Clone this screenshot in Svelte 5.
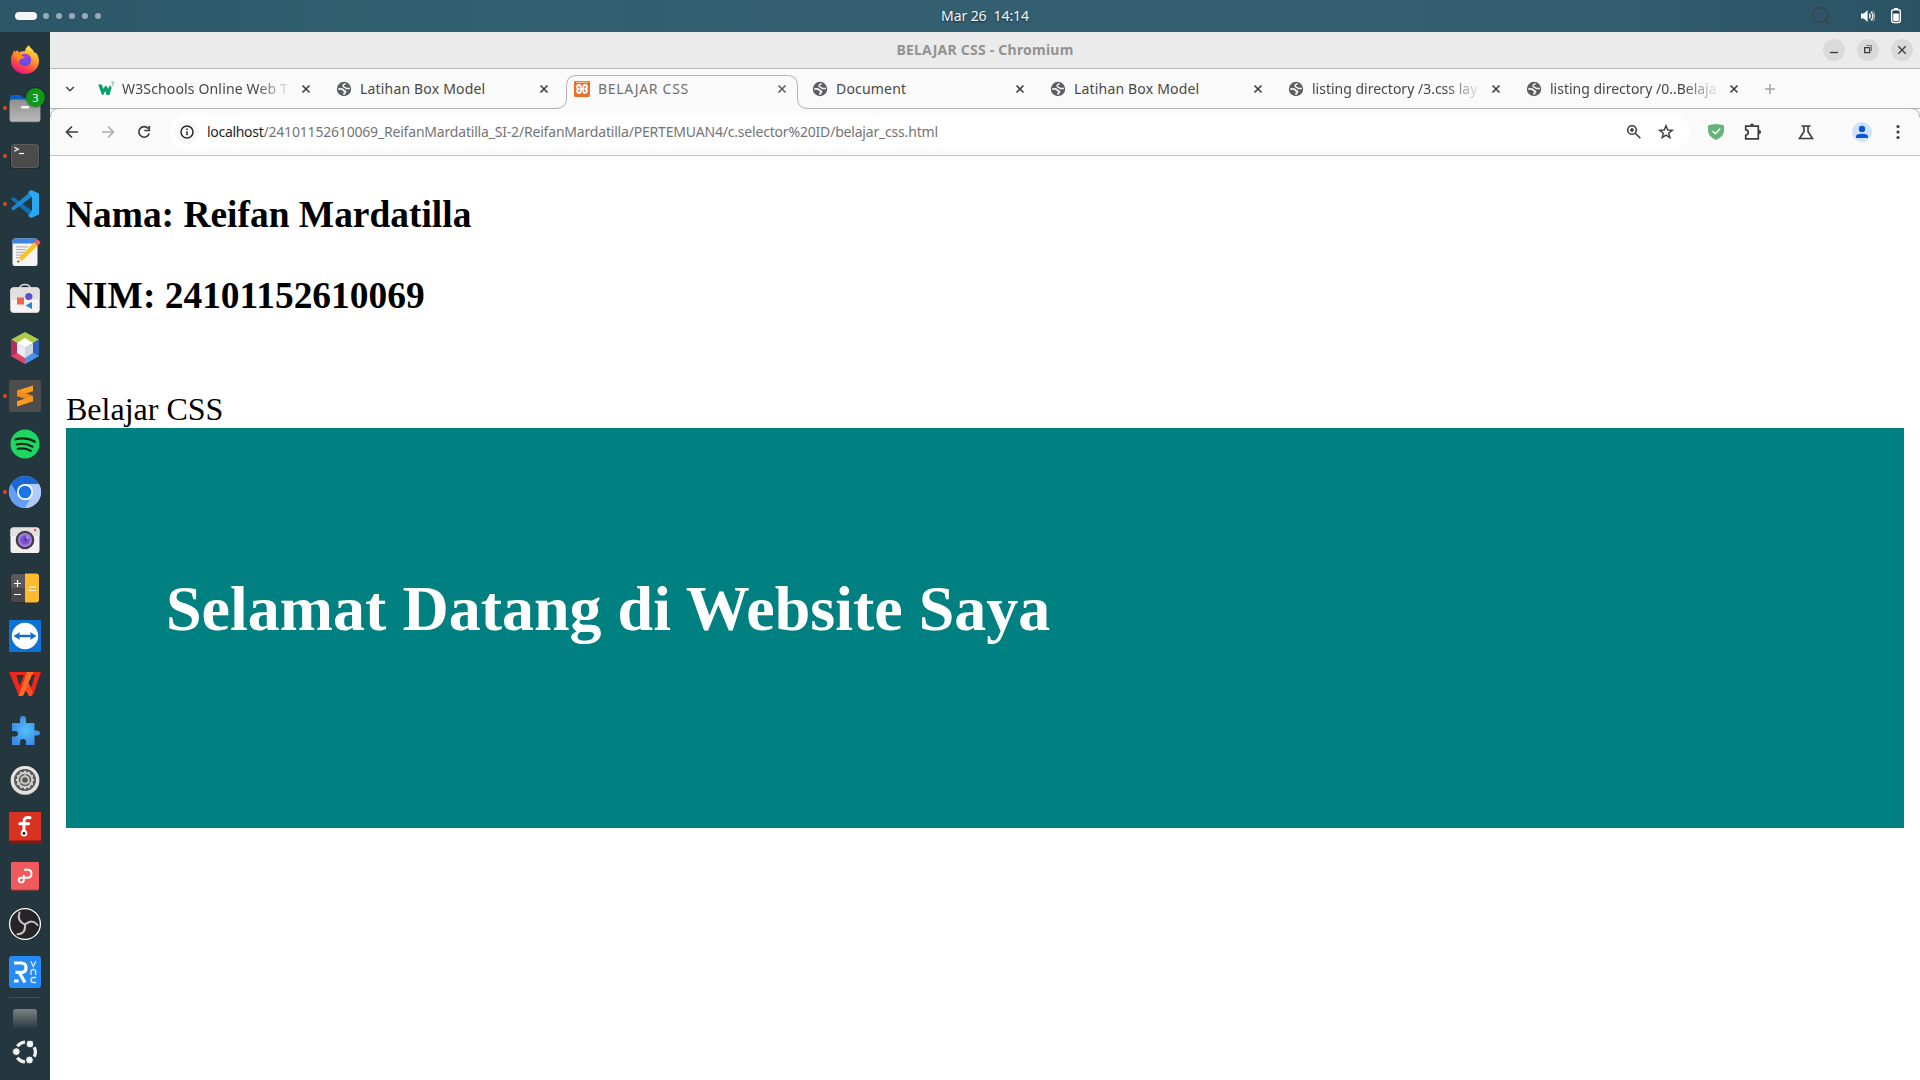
<script>
  const tabs = [
    { title: 'W3Schools Online Web T', icon: 'w3', fade: true, cls: 'w3' },
    { title: 'Latihan Box Model', icon: 'globe', cls: 'box' },
    { title: 'BELAJAR CSS', icon: 'xampp', active: true, cls: 'css' },
    { title: 'Document', icon: 'globe', cls: 'doc' },
    { title: 'Latihan Box Model', icon: 'globe', cls: 'box' },
    { title: 'listing directory /3.css lay', icon: 'globe', fade: true, cls: 'list' },
    { title: 'listing directory /0..Belaja', icon: 'globe', fade: true, cls: 'list' }
  ];

  const dock = [
    { id: 'firefox' },
    { id: 'files', running: true, badge: '3' },
    { id: 'terminal', running: true },
    { id: 'vscode', running: true },
    { id: 'editor' },
    { id: 'software' },
    { id: 'netbeans' },
    { id: 'sublime', running: true },
    { id: 'spotify' },
    { id: 'chromium', running: true },
    { id: 'camera' },
    { id: 'calculator' },
    { id: 'teamviewer' },
    { id: 'wps' },
    { id: 'extensions' },
    { id: 'settings' },
    { id: 'fritzing' },
    { id: 'pdf' },
    { id: 'obs' },
    { id: 'vnc' }
  ];

  const teeth = Array.from({ length: 12 }, (_, i) => i * 30);
</script>

<div class="desktop">
  <header class="topbar">
    <div class="workspaces">
      <i class="current"></i><i></i><i></i><i></i><i></i><i></i>
    </div>
    <div class="clock">Mar 26&nbsp; 14:14</div>
    <div class="tray">
      <svg class="search" width="20" height="20" viewBox="0 0 20 20" fill="none" stroke="#3d4448" stroke-width="1.5">
        <circle cx="9.200" cy="9" r="7.500" /><path d="M14.300 14.200l3.400 3.400" stroke-width="2.200" />
      </svg>
      <svg class="volume" width="18" height="18" viewBox="0 0 18 18">
        <path d="M2 6.600h2.800L8.600 3v12L4.800 11.400H2z" fill="#f4f6f7" />
        <path d="M10.300 6.800q1.800 2.200 0 4.400M12 4.600q3.800 4.400 0 8.800" fill="none" stroke="#f4f6f7" stroke-width="1.400" />
        <path d="M14 3.600q3.400 5.400 0 10.800" fill="none" stroke="#a9b8bf" stroke-width="1" />
      </svg>
      <svg class="battery" width="14" height="18" viewBox="0 0 14 18">
        <path d="M5 1h4v2H5z" fill="#fff" />
        <rect x="2.700" y="2.700" width="8.600" height="12.800" rx="2" fill="#24404c" stroke="#fff" stroke-width="1.400" />
        <rect x="4.200" y="6.500" width="5.600" height="7.600" rx=".8" fill="#fff" />
      </svg>
    </div>
  </header>

  <div class="workarea">
    <nav class="dock">
      {#each dock as app (app.id)}
        <div class="app">
          <svg width="50" height="48" viewBox="0 0 50 48">
            {#if app.running}<circle cx="5" cy="24" r="2" fill="#dc4a1b" />{/if}
            {#if app.id === 'firefox'}
              <defs>
                <linearGradient id="ffa" x1=".8" y1="0" x2=".3" y2="1">
                  <stop offset="0" stop-color="#fff44f" /><stop offset=".4" stop-color="#ffa32a" />
                  <stop offset=".7" stop-color="#ff4b3e" /><stop offset="1" stop-color="#e5108a" />
                </linearGradient>
                <radialGradient id="ffb" cx=".6" cy=".2" r=".9">
                  <stop offset="0" stop-color="#a33bf0" /><stop offset="1" stop-color="#4a54dd" />
                </radialGradient>
              </defs>
              <path d="M29 9.200c.5 1.800 2 2.800 3.400 4.200 1.200 1.200 1.700 2.400 2 3.600l1.200-.6c2.200 2.300 3.400 5.300 3.400 8.400 0 7.400-6.200 13.200-14 13.200S11 32.200 11 24.800c0-3.600.8-6 2.200-8 .1-1 .5-2 1.200-2.900l.8 2 2.800-2 .4 2.600c3-1.500 5-1.300 6.500-1.200.3-2.300 1.700-4.700 4.100-6.100z" fill="url(#ffa)" />
              <circle cx="25" cy="24" r="6.200" fill="url(#ffb)" />
              <path d="M14 17.200c3.500-.8 7 .5 8.200 3l2.500.3c-.3 1.600-2.400 2-4.700 3l-1.300 1.600c-1.600-1.100-3.600-4-4.700-7.900z" fill="#ff8a1e" />
            {:else if app.id === 'files'}
              <path d="M10 13q0-2 2-2h8l3 2.500h14q2 0 2 2V22H10z" fill="#0b5fc4" />
              <rect x="9.700" y="16.200" width="30.600" height="22" rx="2.200" fill="#777" />
              <rect x="9.700" y="15.500" width="30.600" height="22" rx="2.200" fill="url(#fol)" />
              <defs><linearGradient id="fol" x1="0" y1="0" x2="0" y2="1"><stop offset="0" stop-color="#8f8f8f" /><stop offset="1" stop-color="#b9b9b9" /></linearGradient></defs>
              <rect x="21" y="22" width="8" height="2.400" rx=".8" fill="#f5f5f5" />
            {:else if app.id === 'terminal'}
              <rect x="10.500" y="12" width="29" height="24.500" rx="2.500" fill="#1d1d1d" />
              <rect x="11.500" y="12.500" width="27" height="23" rx="2" fill="#4b4b4b" stroke="#686868" stroke-width=".8" />
              <path d="M14.300 15.300l4 2-4 2" fill="none" stroke="#fff" stroke-width="1.200" /><path d="M19 21.500h5" stroke="#fff" stroke-width="1.200" />
            {:else if app.id === 'vscode'}
              <path d="M11.300 18.500l2-1.600 18.500 13.700V37L11.500 19.800z" fill="#0f6fb5" />
              <path d="M11.300 29l2 1.600 18.500-13.700V10.500L11.500 27.700z" fill="#168bd2" />
              <path d="M31 10l8 3.500v21L31 38l-3-2 4-5.500V17.300L28 12z" fill="#29a8f2" />
            {:else if app.id === 'editor'}
              <g transform="translate(0 -.6)">
                <rect x="12.500" y="11" width="25" height="27.500" rx="2.500" fill="#f5f5f5" />
                <path d="M12.500 16v-2.500q0-2.500 2.500-2.500h20q2.500 0 2.500 2.500V16z" fill="#3b84e4" />
                <path d="M16 19.500h12M16 22.200h10M16 24.900h9M16 27.600h7M16 30.300h5" stroke="#a5a5a5" stroke-width="1" />
                <path d="M17.500 34.800l1.800-5L34.500 14.500l3.500 3.600L22.500 33z" fill="#f6c32c" />
                <path d="M34 15l3-3q3 .5 3.500 3.500l-2.800 2.800z" fill="#e8636a" />
                <path d="M17.500 34.800l1.800-5 3.200 3.200z" fill="#f5dba8" /><circle cx="18.200" cy="34.200" r=".9" fill="#333" />
              </g>
            {:else if app.id === 'software'}
              <g transform="translate(0 -2.500)">
                <path d="M19.800 15c0-5.500 10.400-5.500 10.400 0" fill="none" stroke="#dcdcdc" stroke-width="1.500" />
                <rect x="10.500" y="14" width="29" height="25.500" rx="3" fill="#c9c7c4" />
                <rect x="10.500" y="14" width="29" height="24.800" rx="3" fill="#f5f4f2" /><path d="M10.500 26V17q0-3 3-3h23q3 0 3 3v9z" fill="#e2e0de" />
                <rect x="17" y="24" width="7" height="7" fill="#f06450" />
                <circle cx="28.800" cy="23" r="3.600" fill="#5a4fd0" /><path d="M25.500 32l6.500-3.500v7z" fill="#2084d8" />
              </g>
            {:else if app.id === 'netbeans'}
              <path d="M25 8l14 7.500L25 24 11 15.500z" fill="#acc94b" />
              <path d="M11 15.500L25 24v16l-14-8z" fill="#b0305a" /><path d="M11 32l6-3 8 4v7z" fill="#dc4568" />
              <path d="M39 15.500L25 24v16l14-8z" fill="#2c62b8" /><path d="M39 32l-6-3-8 4v7z" fill="#4a96e4" />
              <path d="M25 14l8 5-8 5-8-5z" fill="#fff" /><path d="M17 19l8 5v10l-8-5z" fill="#e8eef2" /><path d="M33 19l-8 5v10l8-5z" fill="#cbd6e0" />
            {:else if app.id === 'sublime'}
              <rect x="9" y="8" width="32" height="32" rx="2" fill="#4d4d4d" />
              <path d="M17 18.500l16-5v5.700l-16 5z" fill="#ff9a1f" /><path d="M17 18.500v5.700l16 5v-5.500z" fill="#f28a14" /><path d="M17 29.200l16-5.300v5.400l-16 5.200z" fill="#ff9a1f" />
            {:else if app.id === 'spotify'}
              <circle cx="25" cy="24" r="14.500" fill="#1ed760" />
              <path d="M15.500 19.300q10.500-2.600 19.500 2.400M16.800 24.400q8.500-2 15.700 2.200M17.800 28.800q7-1.600 12.800 2" fill="none" stroke="#14261b" stroke-width="2.200" stroke-linecap="round" />
            {:else if app.id === 'chromium'}
              <circle cx="25" cy="24" r="16" fill="#aecbfa" />
              <path d="M11.100 16A16 16 0 0 1 38.900 16H25L18 28z" fill="#1967d2" />
              <path d="M11.100 16L18.100 28 25 32h7L25 40A16 16 0 0 1 11.100 16z" fill="#669df6" />
              <path d="M38.900 16H25l7 12-7 12A16 16 0 0 0 38.900 16z" fill="#aecbfa" />
              <circle cx="25" cy="24" r="8" fill="#fff" /><circle cx="25" cy="24" r="6.300" fill="#1a73e8" />
            {:else if app.id === 'camera'}
              <rect x="10.500" y="11.500" width="29" height="25.500" rx="2.800" fill="#f2f1ef" /><path d="M10.500 20v-5.500q0-3 3-3h23q3 0 3 3V20z" fill="#e2e1df" />
              <circle cx="25" cy="24" r="9.300" fill="#403f45" /><circle cx="25" cy="24" r="7" fill="#9d80dc" /><circle cx="25" cy="24" r="4.800" fill="#8250cf" />
              <circle cx="25.500" cy="23.500" r="2" fill="#663ab5" /><circle cx="27.500" cy="21.500" r="1.200" fill="#bca4ed" /><rect x="34" y="13.300" width="2" height="1.800" fill="#e33" />
            {:else if app.id === 'calculator'}
              <rect x="10.500" y="9.500" width="29" height="29" rx="3" fill="#5a5a5a" stroke="#292929" />
              <path d="M25 9.500h11q3 0 3 3v23q0 3-3 3H25z" fill="#fbbb2c" /><path d="M11 24h14v14H14q-3 0-3-3z" fill="#484848" />
              <path d="M14 19.500h7M17.500 16v7M14 30.500h7M29 23h7M29 26.500h7" stroke="#fff" stroke-width="1.200" />
            {:else if app.id === 'teamviewer'}
              <rect x="9" y="8" width="32" height="32" rx="1" fill="#0d72d6" /><circle cx="25" cy="24" r="13.200" fill="#fff" />
              <path d="M13.500 24l6.500-4-.8 2.700h11.600L30 20l6.500 4-6.500 4 .8-2.700H19.200L20 28z" fill="#116dcb" />
            {:else if app.id === 'wps'}
              <path d="M9 12h32L33.500 34q-.8 2-2.600 2H29l-3.300-6-1.700 4q-.8 2-2.500 2H19z" fill="#ef261b" />
              <path d="M16.500 15h7.500l-4.500 11z" fill="#24363e" />
              <path d="M27 12h6.500L24 34q-.8 2-2.500 2H18.500z" fill="#ff6a27" />
              <path d="M32 15h3l-4 13-2.500-5z" fill="#24363e" />
              <path d="M28 22l4.500 10-1 4H29l-3.300-6z" fill="#fa521f" />
            {:else if app.id === 'extensions'}
              <defs><radialGradient id="ext"><stop offset="0" stop-color="#4fc2fb" /><stop offset="1" stop-color="#408de8" /></radialGradient></defs>
              <path d="M12 15h8v-4q0-3 3-3t3 3v4h8.500v7.500h2.500q3 0 3 2.500t-3 2.500h-2.500V37H26v-3q0-3-3-3t-3 3v3h-8v-8.500h3q3-.2 3-2.700t-3-2.800h-3z" fill="url(#ext)" />
            {:else if app.id === 'settings'}
              <circle cx="25" cy="24.500" r="14.500" fill="#b9b9b6" /><circle cx="25" cy="24" r="14" fill="#e5e4e1" /><circle cx="25" cy="24" r="11" fill="#575757" />
              <circle cx="25" cy="24" r="7.200" fill="none" stroke="#d2d2cf" stroke-width="2" />
              {#each teeth as angle}
                <path d="M25 14.800v2" transform="rotate({angle} 25 24)" stroke="#d2d2cf" stroke-width="2" />
              {/each}
              <circle cx="25" cy="24" r="3.800" fill="none" stroke="#c9c9c6" stroke-width="2" /><path d="M25 20v-3M21.500 26L19 27.500M28.500 26l2.500 1.500" stroke="#c9c9c6" stroke-width="1.200" />
            {:else if app.id === 'fritzing'}
              <rect x="9" y="8" width="32" height="32" fill="#d93223" /><rect x="9" y="36.500" width="32" height="3.500" fill="#7d1a10" />
              <path d="M30 13.700q-6-1.200-6 4v9M19.800 19.700h8.800" fill="none" stroke="#fff" stroke-width="3" stroke-linecap="round" />
              <circle cx="24" cy="29.300" r="2.400" fill="#3a1512" stroke="#fff" stroke-width="1.800" />
            {:else if app.id === 'pdf'}
              <rect x="11" y="10" width="28" height="28.500" rx="1.500" fill="#b73c40" /><rect x="11" y="10" width="28" height="27.500" rx="1.500" fill="#f05a5d" />
              <path d="M24 17.800h3.500q4 0 4 4t-4 4h-6q-2.700 0-2.700 2.300t2.300 2.300q2.700 0 2.700-2.500v-5" fill="none" stroke="#fff" stroke-width="1.900" />
            {:else if app.id === 'obs'}
              <circle cx="25" cy="24" r="15.400" fill="#272427" stroke="#fff" stroke-width="1.300" />
              <path d="M25 24.500Q16.500 21 19.500 12.500M25 24.500Q32.500 18.500 37.500 25M25 24.500Q26 34 17.500 34.300" fill="none" stroke="#c5c3c6" stroke-width="2" stroke-linecap="round" />
            {:else if app.id === 'vnc'}
              <rect x="9" y="8" width="32" height="32" rx="3" fill="#268bf5" />
              <path d="M14 15h7q5 0 5 4.700t-5 4.700h-5.500M19.500 25l5.500 9.500M14 33h4.500" fill="none" stroke="#fff" stroke-width="3.200" />
              <path d="M30.800 13.200l2.500 5.300 2.500-5.300M31 27v-3.500q0-2 2.300-2t2.300 2V27M36 29.500h-2.500q-2.500 0-2.500 2.500t2.500 2.500H36" fill="none" stroke="#d6eaff" stroke-width="1.300" />
            {/if}
          </svg>
          {#if app.badge}<span class="badge">{app.badge}</span>{/if}
        </div>
      {/each}
      <div class="divider"></div>
      <div class="drive"></div>
      <svg class="launcher" width="28" height="28" viewBox="0 0 28 28">
        <g fill="none" stroke="#f3f3f3" stroke-width="3.200"><path d="M6.300 8.300Q9.200 4.500 14 4M23.300 9.300q2.200 4.700 0 9.400M6.300 19.700Q9.200 23.500 14 24" /></g>
        <g fill="#f3f3f3" stroke="#24363e" stroke-width="1"><circle cx="5.300" cy="13.600" r="3.900" /><circle cx="19" cy="6" r="3.900" /><circle cx="18.500" cy="22" r="3.900" /></g>
      </svg>
    </nav>

    <main class="window">
      <div class="titlebar">
        <span></span>
        <b>BELAJAR CSS - Chromium</b>
        <div class="controls">
          <svg width="22" height="22" viewBox="0 0 22 22"><circle cx="11" cy="11" r="11" /><path d="M7 13.500h8" /></svg>
          <svg width="22" height="22" viewBox="0 0 22 22"><circle cx="11" cy="11" r="11" /><path d="M7.700 8.700h5v5h-5z" /><path d="M9 6.500h5.500V12" class="thin" /></svg>
          <svg width="22" height="22" viewBox="0 0 22 22"><circle cx="11" cy="11" r="11" /><path d="M7.300 7.300l7.400 7.400m0-7.400l-7.400 7.400" /></svg>
        </div>
      </div>

      <div class="tabstrip">
        <svg class="chevron" width="36" height="39" viewBox="0 0 36 39"><path d="M14.200 18l3.800 3.700 3.800-3.700" /></svg>
        {#each tabs as tab}
          <div class="tab {tab.cls}" class:active={tab.active}>
            {#if tab.active}
              <svg class="outline" width="252" height="35" viewBox="0 0 252 35">
                <path d="M0 33.500Q10.500 33.500 10.500 23V10.500Q10.500.5 20.500.5H231.500Q241.500.5 241.500 10.500V23Q241.500 33.500 252 33.500V35H0z" fill="#fafafa" />
                <path d="M0 33.500Q10.500 33.500 10.500 23V10.500Q10.500.5 20.500.5H231.500Q241.500.5 241.500 10.500V23Q241.500 33.500 252 33.500" fill="none" stroke="#b1b1b1" />
              </svg>
            {/if}
            <svg class="favicon" width="16" height="16" viewBox="0 0 16 16">
              {#if tab.icon === 'w3'}
                <path d="M.3 3.500h3.500l1.700 4.500 1.300-2.700h2L10.300 8l1.500-4 1.800 2.700-2.200 7.200h-2.800L7.200 10l-1.800 3.800H3.800z" fill="#08a06c" />
                <path d="M13.300 1h2.200l-1 1.500q1.200.2.900 1.300-.4 1-2 .7" fill="none" stroke="#3bb58b" stroke-width=".8" />
              {:else if tab.icon === 'globe'}
                <circle cx="8" cy="8" r="7.200" fill="#5b5f65" />
                <path d="M9.700 2.800Q6.600 3.300 7.200 5.300q.3.900 1.800 1.100l1.300 1.200 3.600-.1" fill="none" stroke="#f4f4f4" stroke-width="1.500" />
                <path d="M2.300 8.200q3.200-1 4.700.4.600 1.300 2.200 1.600.8 1.200-.7 1.800l-.8 1.600" fill="none" stroke="#f4f4f4" stroke-width="1.800" />
              {:else}
                <rect width="16" height="16" rx="1.200" fill="#e8702a" /><path d="M2 1.300h12" stroke="#fbd0b2" />
                <g fill="none" stroke="#fff" stroke-width="1.900" stroke-linejoin="round">
                  <path d="M6.700 6.200Q6.700 4 4.900 4T3 6q0 1.400 1.500 2Q3 8.600 3 10t1.900 2 1.800-2.200z" />
                  <path d="M9.300 6.200Q9.300 4 11.100 4T13 6q0 1.400-1.500 2 1.500.6 1.500 2t-1.900 2-1.800-2.200z" />
                  <path d="M6.500 8h3" />
                </g>
              {/if}
            </svg>
            <span class="name" class:fade={tab.fade}>{tab.title}</span>
            <svg class="close" width="16" height="16" viewBox="0 0 16 16"><path d="M4.500 4.500l7 7m0-7l-7 7" /></svg>
          </div>
        {/each}
        <svg class="newtab" width="28" height="39" viewBox="0 0 28 39"><path d="M9 20h10M14 15v10" /></svg>
      </div>

      <div class="toolbar">
        <svg class="tool" viewBox="0 0 36 36"><path d="M24 18H13M18 12.500L12.500 18l5.500 5.500" /></svg>
        <svg class="tool dim" viewBox="0 0 36 36"><path d="M12 18h11M18 12.500l5.500 5.500-5.500 5.500" /></svg>
        <svg class="tool" viewBox="0 0 36 36"><path d="M22.200 14.500a5.300 5.300 0 1 0 1 5M23.300 12v4.500h-5" /></svg>
        <div class="omnibox">
          <svg class="info" width="24" height="24" viewBox="0 0 24 24">
            <circle cx="12" cy="12" r="12" fill="#f8f8f8" /><circle cx="12" cy="12" r="6" fill="none" stroke="#2a2a2a" stroke-width="1.500" />
            <path d="M12 11.200v4M12 8.500v1.500" stroke="#2a2a2a" stroke-width="1.500" />
          </svg>
          <span class="url"><em>localhost</em><span>/24101152610069_ReifanMardatilla_SI-2/ReifanMardatilla/PERTEMUAN4/c.selector%20ID/belajar_css.html</span></span>
          <svg class="pillicon" viewBox="0 0 32 32"><circle cx="14" cy="14" r="4.300" /><path d="M17.300 17.300l5 5M12 14h4M14 12v4" /></svg>
          <svg class="pillicon" viewBox="0 0 32 32"><path d="M16 9.700l1.700 4.300 4.600.3-3.600 2.900 1.200 4.500-3.900-2.500-3.900 2.500 1.200-4.500-3.600-2.900 4.600-.3z" stroke-width="1.400" /></svg>
        </div>
        <svg class="tool shield" viewBox="0 0 36 36"><path d="M10 11.500q8-3 16 0v5q0 6-8 9.500-8-3.500-8-9.500z" fill="#67b279" stroke="none" /><path d="M14.500 17l2.800 2.700 4.800-4.900" stroke="#fff" stroke-width="1.500" /></svg>
        <svg class="tool" viewBox="0 0 36 36"><path d="M11.700 12.200h12.600v12.600H11.700v-3.500q2.600-.6 2.600-2.800t-2.600-2.800z" stroke-width="1.700" /><path d="M16 11.500a2 2 0 0 1 4 0zM25 16a2.100 2.100 0 0 1 0 4.200z" fill="#3d3d3d" stroke="none" /></svg>
        <svg class="tool flask" viewBox="0 0 36 36"><path d="M13.500 12h9M16 12v5.500l-4.500 7h13l-4.500-7V12" stroke-width="1.600" /></svg>
        <svg class="tool avatar" viewBox="0 0 36 36"><circle cx="18" cy="18" r="10" fill="#d0e2fb" stroke="none" /><circle cx="18" cy="15" r="3.200" fill="#0b57d0" stroke="none" /><path d="M12 24v-1.500q0-2.800 6-2.800t6 2.800V24z" fill="#0b57d0" stroke="none" /></svg>
        <svg class="tool" viewBox="0 0 36 36"><g fill="#3d3d3d" stroke="none"><circle cx="18" cy="12.500" r="1.600" /><circle cx="18" cy="18" r="1.600" /><circle cx="18" cy="23.500" r="1.600" /></g></svg>
        <svg class="corner left" width="9" height="9" viewBox="0 0 9 9"><path d="M.5 9Q.5.500 9 .5" /></svg>
        <svg class="corner right" width="9" height="9" viewBox="0 0 9 9"><path d="M8.500 9Q8.500.500 0 .5" /></svg>
      </div>

      <article class="page">
        <h3>Nama: Reifan Mardatilla</h3>
        <h3>NIM: 24101152610069</h3>
        <br />
        Belajar CSS
        <section><h1>Selamat Datang di Website Saya</h1></section>
      </article>
    </main>
  </div>
</div>

<style>
  :global(body) { margin: 0; background: #fff; overflow: hidden; }
  .desktop { width: 1920px; height: 1080px; display: flex; flex-direction: column; overflow: hidden; font-family: 'Noto Sans', 'Open Sans', sans-serif; }
  svg { display: block; flex: none; }

  .topbar { height: 32px; flex: none; display: grid; grid-template-columns: 900px 170px 1fr; align-items: center; background: linear-gradient(90deg, #2c5667 0, #30606f 22%, #335f71 40%, #335f71 70%, #315d6f 84%, #2a5263 100%); }
  .workspaces { display: flex; align-items: center; gap: 7px; padding-left: 15px; }
  .workspaces i { width: 6px; height: 6px; border-radius: 3px; background: #96abb5; }
  .workspaces .current { width: 22px; height: 8px; border-radius: 4px; background: #f4f5f6; margin-right: -1px; }
  .clock { text-align: center; color: #f5f7f8; font-size: 14px; line-height: 20px; padding-bottom: 1px; text-shadow: 0 1px 2px #0009; white-space: nowrap; letter-spacing: -.1px; }
  .tray { display: flex; align-items: center; justify-content: flex-end; padding-right: 17px; }
  .search { margin-right: 28px; }
  .volume { margin-right: 12px; }

  .workarea { flex: 1; display: flex; min-height: 0; }
  .dock { width: 50px; flex: none; display: flex; flex-direction: column; align-items: center; padding-top: 4px; box-sizing: border-box; background: #24363e; }
  .app { width: 50px; height: 48px; position: relative; flex: none; }
  .badge { position: absolute; left: 26px; top: 4px; width: 19px; height: 19px; border-radius: 50%; background: #109618; box-shadow: 0 0 2px #0008; color: #fff; font-size: 11px; line-height: 19px; text-align: center; }
  .divider { width: 32px; height: 1px; background: #484d51; margin-top: 1px; flex: none; }
  .drive { width: 24px; height: 19px; margin-top: 11px; border-radius: 3px 3px 0 0; background: linear-gradient(#7b8083, #2c3c44); flex: none; }
  .launcher { margin-top: 10px; }

  .window { flex: 1; display: flex; flex-direction: column; min-width: 0; background: #fff; }
  .titlebar { height: 36px; flex: none; display: grid; grid-template-columns: 1fr auto 1fr; align-items: center; background: #ebebeb; border-bottom: 1px solid #b9b9b9; }
  .titlebar b { color: #929292; font-size: 14px; letter-spacing: .23px; line-height: 20px; }
  .controls { display: flex; gap: 12px; justify-content: flex-end; padding-right: 7px; }
  .controls circle { fill: #dadada; }
  .controls path { fill: none; stroke: #3c3c3c; stroke-width: 1.3; }
  .controls .thin { stroke: #777; stroke-width: 1; }

  .tabstrip { height: 39px; flex: none; display: flex; align-items: center; padding-left: 2px; background: #fafafa; border-bottom: 1px solid #b1b1b1; }
  .chevron { margin-right: 2px; }
  .chevron path { fill: none; stroke: #484848; stroke-width: 1.6; }
  .tab { width: 230px; height: 39px; padding-left: 8px; display: flex; align-items: center; position: relative; color: #474747; font-size: 14px; flex: none; }
  .w3 { letter-spacing: .15px; }
  .box, .doc { letter-spacing: .18px; }
  .css { letter-spacing: .7px; }
  .tab.active { color: #707070; }
  .outline { position: absolute; left: -10px; top: 6px; }
  .favicon { position: relative; margin-right: 8px; }
  .name { position: relative; width: 168px; margin-right: 8px; white-space: nowrap; line-height: 22px; }
  .fade { mask-image: linear-gradient(90deg, #000 134px, transparent 170px); }
  .close { position: relative; fill: none; stroke: #3c3c3c; stroke-width: 1.6; }
  .active .close { stroke: #5c5c5c; }
  .newtab path { stroke: #a2a2a2; stroke-width: 1.5; }

  .toolbar { height: 46px; flex: none; display: flex; align-items: center; position: relative; padding-left: 4px; background: #fafafa; border-bottom: 1px solid #c4c4c4; }
  .tool { width: 36px; height: 36px; fill: none; stroke: #3d3d3d; stroke-width: 1.7; }
  .dim { stroke: #b0b0b0; }
  .omnibox { width: 1520px; height: 34px; margin: 0 8px; border-radius: 17px; display: flex; align-items: center; background: #fff; box-sizing: border-box; padding: 0 8px 0 5px; flex: none; }
  .url { margin-left: 8px; flex: 1; display: flex; white-space: nowrap; font-size: 14px; line-height: 22px; color: #747474; }
  .url em { font-style: normal; color: #1f1f1f; letter-spacing: -.3px; }
  .url span { letter-spacing: -.19px; }
  .pillicon { width: 32px; height: 32px; fill: none; stroke: #3d3d3d; stroke-width: 1.6; }
  .flask { margin-left: 18px; }
  .avatar { margin-left: 20px; }
  .corner { position: absolute; top: -1px; fill: none; stroke: #b1b1b1; }
  .corner.left { left: 0; }
  .corner.right { right: 0; }

  .page { flex: 1; min-height: 0; padding: 0 16px; overflow: hidden; background: #fff; color: #000; font: 32px 'Liberation Serif', serif; }
  .page h3 { font-size: 37.44px; margin: 1em 0; }
  .page section { height: 400px; box-sizing: border-box; padding: 100px; background: teal; color: #fff; }
  .page h1 { font-size: 64px; margin: .68em 0; }
</style>
